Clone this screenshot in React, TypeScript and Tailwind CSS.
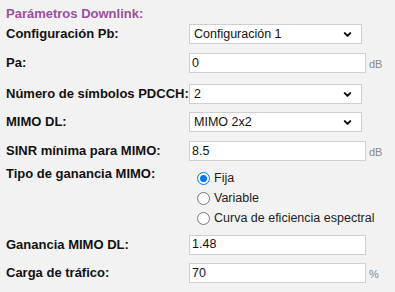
import { ChevronDown } from "lucide-react";

const font = { fontFamily: '"Liberation Sans", Arial, sans-serif' };

function Select({ value }: { value: string }) {
  return (
    <div className="relative flex h-[20px] w-[173px] items-center border border-[#cfcfcf] bg-white pl-[4px] text-[12.5px] text-[#111]">
      <span>{value}</span>
      <ChevronDown className="absolute right-[8px] top-[4px] h-[11px] w-[11px]" strokeWidth={4.5} />
    </div>
  );
}

function Field({ value, unit }: { value: string; unit?: string }) {
  return (
    <div className="flex items-center gap-[3px]">
      <div className="flex h-[20px] w-[177px] items-center border border-[#cfcfcf] bg-white pl-[2px] text-[12.5px] text-[#111]">
        {value}
      </div>
      {unit && <span className="pt-[3px] text-[11px] text-[#888]">{unit}</span>}
    </div>
  );
}

function Radio({ label, checked }: { label: string; checked?: boolean }) {
  return (
    <label className="flex h-[20px] items-center gap-[4px] text-[12.5px] text-[#222]">
      <span
        className={
          checked
            ? "flex h-[13px] w-[13px] items-center justify-center rounded-full border-[1.5px] border-[#0075ff] bg-white"
            : "h-[13px] w-[13px] rounded-full border border-[#767676] bg-white"
        }>
        {checked && <span className="h-[7px] w-[7px] rounded-full bg-[#0075ff]" />}
      </span>
      {label}
    </label>
  );
}

export default function App() {
  const label = "w-[183px] shrink-0 whitespace-nowrap text-[13px] font-bold text-[#111]";
  return (
    <div className="h-[292px] w-[395px] bg-[#f2f2f2] pl-[6px] pt-[4px]" style={font}>
      <div className="h-[20px] text-[13px] font-bold text-[#9b4f9f]">Parámetros Downlink:</div>

      <div className="flex h-[20px] items-center">
        <div className={label}>Configuración Pb:</div>
        <Select value="Configuración 1" />
      </div>
      <div className="mt-[9px] flex h-[20px] items-center">
        <div className={label}>Pa:</div>
        <Field value="0" unit="dB" />
      </div>
      <div className="mt-[11px] flex h-[20px] items-center">
        <div className={label}>Número de símbolos PDCCH:</div>
        <Select value="2" />
      </div>
      <div className="mt-[8px] flex h-[20px] items-center">
        <div className={label}>MIMO DL:</div>
        <Select value="MIMO 2x2" />
      </div>
      <div className="mt-[9px] flex h-[20px] items-center">
        <div className={label}>SINR mínima para MIMO:</div>
        <Field value="8.5" unit="dB" />
      </div>
      <div className="mt-[7px] flex items-start">
        <div className={label + " -mt-[4px]"}>Tipo de ganancia MIMO:</div>
        <div className="flex flex-col pl-[8px]">
          <Radio label="Fija" checked />
          <Radio label="Variable" />
          <Radio label="Curva de eficiencia espectral" />
        </div>
      </div>
      <div className="mt-[7px] flex h-[19px] items-center">
        <div className={label}>Ganancia MIMO DL:</div>
        <Field value="1.48" />
      </div>
      <div className="mt-[9px] flex h-[20px] items-center">
        <div className={label}>Carga de tráfico:</div>
        <Field value="70" unit="%" />
      </div>
    </div>
  );
}
